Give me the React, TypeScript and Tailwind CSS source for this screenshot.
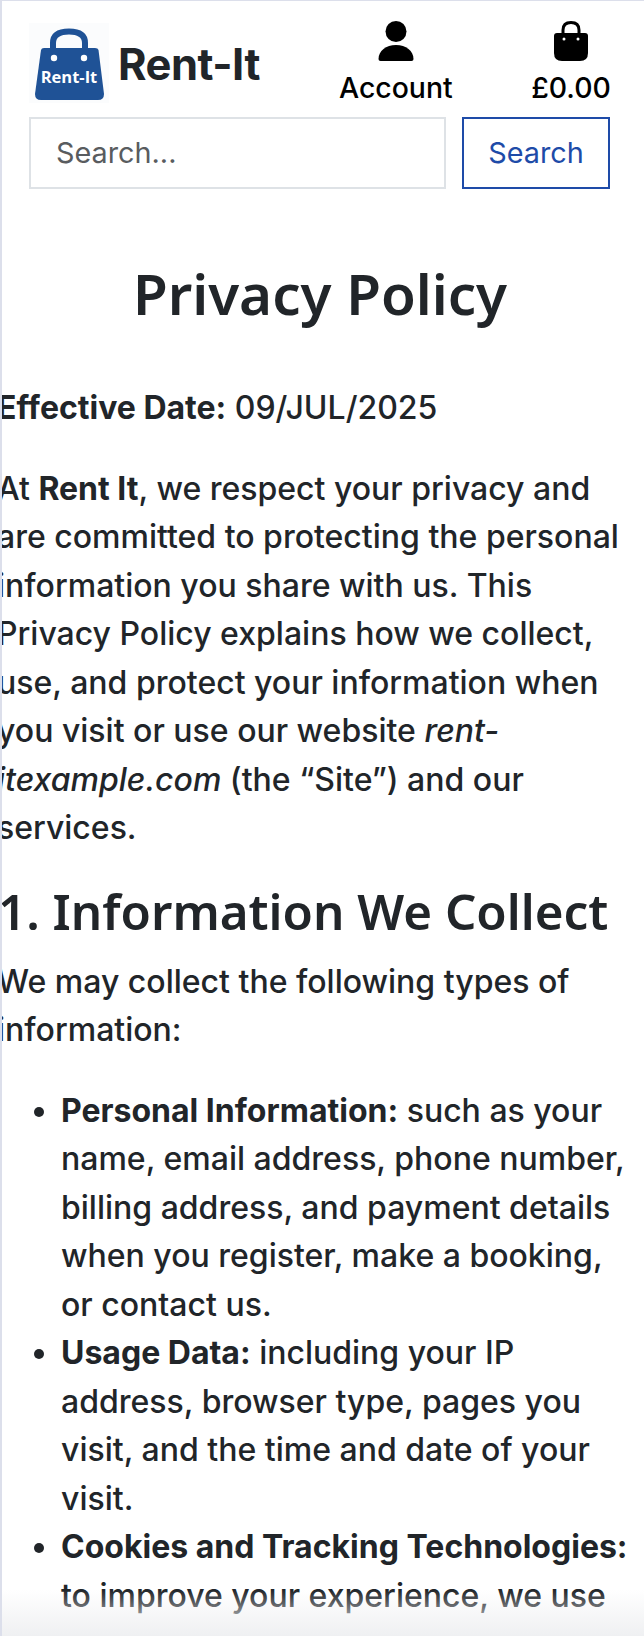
function LogoBag() {
    return (
        <svg viewBox="0 0 80 80" className="w-20 h-20 shrink-0 bg-[#fbfcfd]">
            <path d="M24 27 V20 C24 11 31 8.500 40 8.500 C49 8.500 56 11 56 20 V27" fill="none" stroke="#1f5296" strokeWidth="6" />
            <path d="M12 27 Q12.500 25 15 25 H66 Q69 25 69.500 27 L75 71 Q75 77 69 77 H12 Q6 77 6 71 Z" fill="#1f5296" />
            <circle cx="25" cy="35" r="3.200" fill="#fff" />
            <circle cx="55" cy="35" r="3.200" fill="#fff" />
            <text x="40" y="60" textAnchor="middle" fill="#fff" fontSize="16.500" fontWeight="700" fontFamily="'Open Sans', sans-serif">Rent-It</text>
        </svg>
    );
}

function BagIcon() {
    return (
        <svg viewBox="0 0 36 40" className="w-9 h-10">
            <path d="M10 15 V9 C10 3.500 13.500 1.500 18 1.500 C22.500 1.500 26 3.500 26 9 V15" fill="none" stroke="#000" strokeWidth="3" />
            <path d="M4 12 H32 Q35 12 35 15 V32 Q35 40 27 40 H9 Q1 40 1 32 V15 Q1 12 4 12 Z" fill="#000" />
            <circle cx="11" cy="18" r="1.500" fill="#fff" />
            <circle cx="25" cy="18" r="1.500" fill="#fff" />
        </svg>
    );
}

function UserIcon() {
    return (
        <svg viewBox="0 0 36 40" className="w-9 h-10">
            <circle cx="18" cy="10.500" r="10.500" fill="#000" />
            <path d="M0.500 38 C0.500 30 8 24 18 24 C28 24 35.500 30 35.500 38 Q35.500 40 33.500 40 H2.500 Q0.500 40 0.500 38 Z" fill="#000" />
        </svg>
    );
}

export default function App() {
    return (
        <div className="relative h-[1636px] overflow-hidden bg-white border-l-2 border-t border-[#dcdfeb] font-['Inter',sans-serif] text-[#212529]">
            {/* Header */}
            <header className="pl-[27px] pr-[34px] pt-[20px]">
                <div className="flex items-start">
                    <div className="pt-[2px]"><LogoBag /></div>
                    <span className="ml-[9px] mt-[15px] text-[43.500px] font-bold leading-[56px] tracking-[-0.5px]">Rent-It</span>
                    <a className="ml-[80px] flex flex-col items-center w-[112px] text-black text-[28.400px] leading-[34px] font-medium">
                        <UserIcon />
                        <span className="mt-[10px]">Account</span>
                    </a>
                    <a className="ml-auto flex flex-col items-center w-[78px] text-black text-[28.400px] leading-[34px] font-medium">
                        <BagIcon />
                        <span className="mt-[10px]">£0.00</span>
                    </a>
                </div>
                <div className="flex gap-4 mt-[12px]">
                    <div className="w-[417px] h-[72px] border-2 border-[#dee2e6] flex items-center pl-[25px] text-[28.800px] text-[#595c5f]">Search...</div>
                    <button className="w-[148px] h-[72px] border-2 border-[#1e4ba8] text-[#1e4ba8] text-[28.800px]">Search</button>
                </div>
            </header>

            {/* Policy */}
            <main className="mt-[71px] text-[32px] leading-[48.500px] font-medium">
                <h1 className="text-[56.500px] leading-[67px] font-semibold text-center font-['Noto_Sans',sans-serif] pr-[6px]">Privacy Policy</h1>
                <p className="mt-[57px] -ml-[5px]"><strong className="font-bold">Effective Date:</strong> 09/JUL/2025</p>
                <p className="mt-[32px] -ml-[5px] w-[636px]">
                    At <strong className="font-bold">Rent It</strong>, we respect your privacy and are committed to protecting the personal information you share with us. This Privacy Policy explains how we collect, use, and protect your information when you visit or use our website <em>rent-itexample.com</em> (the “Site”) and our services.
                </p>
                <h2 className="mt-[22px] -ml-[4px] text-[49.300px] leading-[72px] font-semibold font-['Noto_Sans',sans-serif] whitespace-nowrap">1. Information We Collect</h2>
                <p className="mt-[11px] -ml-[5px] w-[600px]">We may collect the following types of information:</p>
                <ul className="mt-[32px] ml-[59px] mr-[8px] list-disc">
                    <li><strong className="font-bold">Personal Information:</strong> such as your name, email address, phone number, billing address, and payment details when you register, make a booking, or contact us.</li>
                    <li><strong className="font-bold">Usage Data:</strong> including your IP address, browser type, pages you visit, and the time and date of your visit.</li>
                    <li className="whitespace-nowrap"><strong className="font-bold">Cookies and Tracking Technologies:</strong><br />to improve your experience, we use</li>
                </ul>
            </main>

            {/* Bottom fade over the clipped page */}
            <div className="absolute bottom-0 -left-[2px] right-0 h-[46px] bg-gradient-to-b from-white/0 to-[#eff0f2]" />
        </div>
    );
}
